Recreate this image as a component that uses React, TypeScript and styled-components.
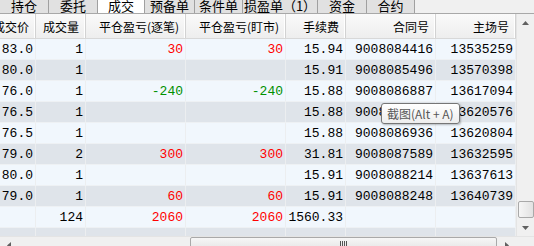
import React from 'react';
import styled, { createGlobalStyle } from 'styled-components';

const GlobalStyle = createGlobalStyle`
  html, body {
    margin: 0;
    padding: 0;
    background: #f0f0f0;
  }
`;

const Window = styled.div`
  width: 534px;
  height: 246px;
  overflow: hidden;
  display: flex;
  flex-direction: column;
  background: #f0f0f0;
  position: relative;
`;

const TabBar = styled.div`
  height: 13px;
  display: flex;
  border-bottom: 1px solid #a8a8a8;
  background: #f0f0f0;
  flex-shrink: 0;
`;

const Tab = styled.div<{ $w: number; $active?: boolean }>`
  width: ${(p) => p.$w}px;
  height: 13px;
  box-sizing: border-box;
  border-right: 1px solid #a0a0a0;
  background: ${(p) => (p.$active ? '#ffffff' : '#e1e1e1')};
  color: #000;
  font-family: 'Noto Sans CJK SC', sans-serif;
  font-size: 13px;
  line-height: 13px;
  display: flex;
  justify-content: center;
  align-items: flex-end;
  overflow: hidden;

  span {
    position: relative;
    top: -1px;
  }
`;

const Body = styled.div`
  display: flex;
  flex-shrink: 0;
`;

const TableArea = styled.div`
  width: 516px;
  display: flex;
  flex-direction: column;
`;

const cols = [36, 50, 100, 100, 60, 90, 80];
const gridCols = cols.map((c) => `${c}px`).join(' ');

const HeaderRow = styled.div`
  display: grid;
  grid-template-columns: ${gridCols};
  height: 25px;
  background: linear-gradient(#fafafa, #eeeeee);
  border-bottom: 1px solid #d8d8d8;
  box-sizing: border-box;
`;

const HeaderCell = styled.div`
  display: flex;
  justify-content: flex-end;
  align-items: center;
  padding-right: 6px;
  box-sizing: border-box;
  border-right: 1px solid #d2d2d2;
  box-shadow: inset -1px 0 0 #ffffff;
  font-family: 'Noto Sans CJK SC', sans-serif;
  font-size: 12px;
  color: #000;
  white-space: nowrap;
  overflow: hidden;
`;

const Rows = styled.div`
  height: 197px;
  overflow: hidden;
`;

const Row = styled.div<{ $alt: boolean }>`
  display: grid;
  grid-template-columns: ${gridCols};
  height: 21px;
  box-sizing: border-box;
  background: ${(p) => (p.$alt ? '#dfe4ea' : '#f1f7fd')};
  border-bottom: 1px solid #eef1f4;
`;

const Cell = styled.div<{ $tone?: 'red' | 'green' }>`
  display: flex;
  justify-content: flex-end;
  align-items: center;
  padding-right: 2px;
  box-sizing: border-box;
  border-right: 1px solid #eceef0;
  font-family: 'Liberation Mono', monospace;
  font-size: 13px;
  color: ${(p) => (p.$tone === 'red' ? '#ff0000' : p.$tone === 'green' ? '#009000' : '#000')};
  white-space: nowrap;
  overflow: hidden;
`;

const HScroll = styled.div`
  height: 17px;
  display: flex;
  align-items: stretch;
  background: #f0f0f0;
  border-top: 1px solid #e4e4e4;
  flex-shrink: 0;
`;

const ArrowBtn = styled.div<{ $w?: number; $h?: number }>`
  width: ${(p) => p.$w ?? 18}px;
  height: ${(p) => p.$h ?? 17}px;
  display: flex;
  align-items: center;
  justify-content: center;
  flex-shrink: 0;
`;

const HTrack = styled.div`
  flex: 1;
  display: flex;
  padding-left: 172px;
`;

const HThumb = styled.div`
  width: 307px;
  height: 16px;
  box-sizing: border-box;
  border: 1px solid #a9a9a9;
  border-radius: 2px;
  background: linear-gradient(#f6f6f6, #e2e2e2);
  display: flex;
  justify-content: center;
  padding-top: 3px;
  gap: 1px;

  i {
    width: 1px;
    height: 7px;
    background: #555;
  }
`;

const VScroll = styled.div`
  width: 18px;
  height: 222px;
  display: flex;
  flex-direction: column;
  background: #f0f0f0;
  border-left: 1px solid #e4e4e4;
  box-sizing: border-box;
`;

const VTrack = styled.div`
  flex: 1;
  display: flex;
  flex-direction: column;
  justify-content: flex-end;
  align-items: center;
  padding-bottom: 1px;
`;

const VThumb = styled.div`
  width: 16px;
  height: 17px;
  box-sizing: border-box;
  border: 1px solid #a9a9a9;
  border-radius: 2px;
  background: linear-gradient(90deg, #f6f6f6, #e2e2e2);
`;

const Tooltip = styled.div`
  position: absolute;
  left: 381px;
  top: 103px;
  height: 21px;
  padding: 0 5px;
  box-sizing: border-box;
  display: flex;
  align-items: center;
  background: linear-gradient(#ffffff, #eeeeee);
  border: 1px solid #767676;
  border-radius: 3px;
  box-shadow: 1px 1px 2px rgba(0, 0, 0, 0.25);
  font-family: 'Noto Sans CJK SC', sans-serif;
  font-size: 12px;
  color: #575757;
  white-space: nowrap;
`;

const Tri = ({ dir }: { dir: 'up' | 'down' | 'left' | 'right' }) => {
  const pts = {
    up: '0,4 7,4 3.5,0',
    down: '0,0 7,0 3.5,4',
    left: '4,0 4,7 0,3.5',
    right: '0,0 0,7 4,3.5',
  }[dir];
  const vert = dir === 'up' || dir === 'down';
  return (
    <svg width={vert ? 7 : 4} height={vert ? 4 : 7}>
      <polygon points={pts} fill="#606060" />
    </svg>
  );
};

const tabs = [
  { label: '持仓', w: 49 },
  { label: '委托', w: 49 },
  { label: '成交', w: 47, active: true },
  { label: '预备单', w: 50 },
  { label: '条件单', w: 48 },
  { label: '损盈单（1）', w: 75 },
  { label: '资金', w: 49 },
  { label: '合约', w: 48 },
];

const headers = ['成交价', '成交量', '平仓盈亏(逐笔)', '平仓盈亏(盯市)', '手续费', '合同号', '主场号'];

type Tone = 'red' | 'green' | undefined;
const rows: { v: string[]; tone?: Tone }[] = [
  { v: ['83.0', '1', '30', '30', '15.94', '9008084416', '13535259'], tone: 'red' },
  { v: ['80.0', '1', '', '', '15.91', '9008085496', '13570398'] },
  { v: ['76.0', '1', '-240', '-240', '15.88', '9008086887', '13617094'], tone: 'green' },
  { v: ['76.5', '1', '', '', '15.88', '9008086902', '13620576'] },
  { v: ['76.5', '1', '', '', '15.88', '9008086936', '13620804'] },
  { v: ['79.0', '2', '300', '300', '31.81', '9008087589', '13632595'], tone: 'red' },
  { v: ['80.0', '1', '', '', '15.91', '9008088214', '13637613'] },
  { v: ['79.0', '1', '60', '60', '15.91', '9008088248', '13640739'], tone: 'red' },
  { v: ['', '124', '2060', '2060', '1560.33', '', ''], tone: 'red' },
  { v: ['', '', '', '', '', '', ''] },
];

export default function App() {
  return (
    <>
      <GlobalStyle />
      <Window>
        <TabBar>
          {tabs.map((t) => (
            <Tab key={t.label} $w={t.w} $active={t.active}>
              <span>{t.label}</span>
            </Tab>
          ))}
        </TabBar>

        <Body>
          <TableArea>
            <HeaderRow>
              {headers.map((h) => (
                <HeaderCell key={h}>{h}</HeaderCell>
              ))}
            </HeaderRow>
            <Rows>
              {rows.map((r, i) => (
                <Row key={i} $alt={i % 2 === 1}>
                  {r.v.map((c, j) => (
                    <Cell key={j} $tone={j === 2 || j === 3 ? r.tone : undefined}>
                      {c}
                    </Cell>
                  ))}
                </Row>
              ))}
            </Rows>
          </TableArea>
          <VScroll>
            <ArrowBtn $w={17} $h={17}>
              <Tri dir="up" />
            </ArrowBtn>
            <VTrack>
              <VThumb />
            </VTrack>
            <ArrowBtn $w={17} $h={17}>
              <Tri dir="down" />
            </ArrowBtn>
          </VScroll>
        </Body>

        <HScroll>
          <ArrowBtn>
            <Tri dir="left" />
          </ArrowBtn>
          <HTrack>
            <HThumb>
              <i />
              <i />
              <i />
              <i />
            </HThumb>
          </HTrack>
          <ArrowBtn>
            <Tri dir="right" />
          </ArrowBtn>
          <ArrowBtn $w={18} />
        </HScroll>

        <Tooltip>截图(Alt + A)</Tooltip>
      </Window>
    </>
  );
}
